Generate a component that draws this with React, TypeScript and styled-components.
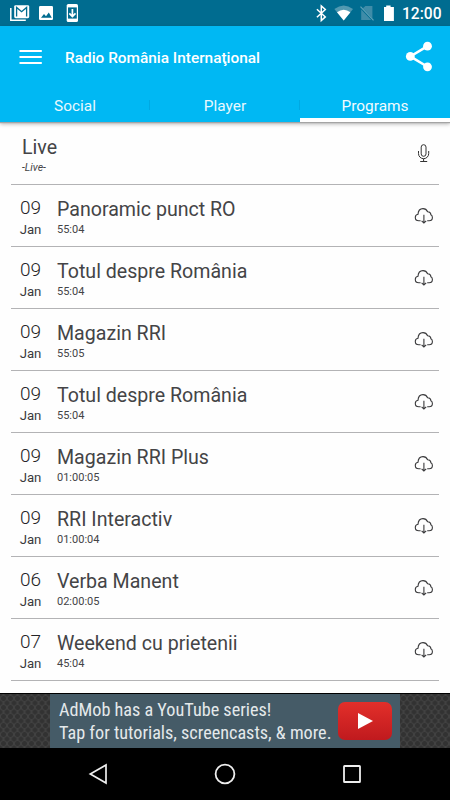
import React from "react";
import styled, { createGlobalStyle } from "styled-components";

const Global = createGlobalStyle`
  * { box-sizing: border-box; }
  html, body { margin: 0; padding: 0; background: #000; }
  body { font-family: Roboto, sans-serif; }
  svg { display: block; flex: none; }
`;

const Screen = styled.div`
  width: 450px;
  height: 800px;
  display: flex;
  flex-direction: column;
  overflow: hidden;
  background: #fefefe;
`;

const StatusBar = styled.div`
  height: 26px;
  flex: none;
  display: flex;
  align-items: center;
  justify-content: space-between;
  background: #006c90;
  color: #fff;
`;

const Clock = styled.span`
  width: 40px;
  margin-left: 8px;
  padding-top: 2px;
  font-size: 15.6px;
  font-weight: 500;
  line-height: 26px;
  white-space: nowrap;
`;

const StatusRight = styled.div`
  display: flex;
  align-items: center;
  padding-right: 8px;
  height: 26px;
`;

const Header = styled.header`
  height: 96px;
  flex: none;
  position: relative;
  background: #00b8f3;
  box-shadow: 0 1px 1px #a4a4a4, 0 2px 4px rgba(0, 0, 0, 0.3);
  color: #fff;
`;

const TitleRow = styled.div`
  height: 62px;
  display: flex;
  align-items: center;
  padding: 0 17px 0 19px;
`;

const Title = styled.h1`
  margin: 2px 0 0 23px;
  flex: 1;
  font-size: 15.4px;
  line-height: 20px;
  font-weight: 500;
`;

const Tabs = styled.nav`
  height: 34px;
  display: grid;
  grid-template-columns: repeat(3, 1fr);
`;

const Tab = styled.div<{ $active?: boolean }>`
  display: flex;
  justify-content: center;
  height: 34px;
  padding-top: 8px;
  font-size: 15.4px;
  line-height: 20px;
  color: ${(p) => (p.$active ? "#f4fbfe" : "#e8f8fe")};
  border-bottom: ${(p) => (p.$active ? "4px solid #fff" : "0")};
  background: ${(p) =>
    p.$active
      ? "none"
      : "linear-gradient(#00a9e2, #00a9e2) right 0 top 12px / 1px 10px no-repeat"};
`;

const List = styled.main`
  height: 571px;
  flex: none;
  padding: 1px 11px 0;
`;

const Row = styled.div`
  height: 62px;
  display: flex;
  border-bottom: 1px solid #b3b3b5;
  color: #444446;
`;

const DateBlock = styled.div`
  width: 39px;
  margin-right: 7px;
  padding-top: 11px;
  text-align: center;
  color: #3a3a3c;
`;

const Day = styled.div`
  font-size: 19px;
  line-height: 24px;
  font-weight: 350;
  color: #242426;
`;

const Month = styled.div`
  font-size: 13.2px;
  line-height: 19px;
`;

const Info = styled.div<{ $live?: boolean }>`
  flex: 1;
  padding-top: 13px;
  margin-left: ${(p) => (p.$live ? "11px" : "0")};
`;

const Name = styled.div`
  font-size: 19.6px;
  line-height: 24px;
  white-space: nowrap;
`;

const Detail = styled.div<{ $italic?: boolean }>`
  font-size: ${(p) => (p.$italic ? "10.5px" : "11px")};
  font-style: ${(p) => (p.$italic ? "italic" : "normal")};
  line-height: 15px;
`;

const Action = styled.div<{ $top: number }>`
  width: 20px;
  margin-right: 5px;
  padding-top: ${(p) => p.$top}px;
`;

const AdBar = styled.div`
  height: 55px;
  flex: none;
  border-top: 1px solid #000;
`;

const AdGrid = styled.div`
  height: 54px;
  display: grid;
  grid-template-columns: 50px 350px 50px;
`;

const Mesh = styled.div`
  background-color: #414141;
  background-image: radial-gradient(circle, #323232 0 2px, transparent 2.8px),
    radial-gradient(circle, #323232 0 2px, transparent 2.8px);
  background-size: 7px 9px;
  background-position: 0 0, 3.5px 4.5px;
`;

const Banner = styled.div`
  display: flex;
  align-items: center;
  justify-content: space-between;
  padding: 0 8px 0 9px;
  background: #455b67;
  color: #e4e9eb;
`;

const AdCopy = styled.div`
  width: 274px;
  font-family: "Roboto Condensed", Roboto, sans-serif;
  font-size: 18.2px;
  line-height: 23px;
  white-space: nowrap;
`;

const AdLine = styled.div`
  height: 23px;
`;

const Play = styled.div`
  width: 54px;
  height: 38px;
  border-radius: 7px;
  display: flex;
  align-items: center;
  padding-left: 20px;
  background: linear-gradient(#e32f2a, #c01a1e);
`;

const NavBar = styled.div`
  flex: 1;
  display: flex;
  align-items: center;
  justify-content: space-between;
  padding: 0 88px;
  background: #000;
`;

const NotificationIcons = () => (
  <svg width="90" height="26" viewBox="0 0 90 26" fill="none">
    <path d="M10.8 8v12.3h15" stroke="#fff" strokeWidth="1.5" />
    <rect x="14.2" y="5.2" width="15" height="13" rx="1.4" fill="#fff" />
    <path d="M16.6 16.6V7.4l5 4.3 5-4.3v9.2" stroke="#006c90" strokeWidth="1.3" />
    <rect x="39" y="6" width="14" height="14" rx="1.2" fill="#fff" />
    <path d="M41 17.8l3-3.8 2 2.2 2.8-3.6 3 5.2z" fill="#006c90" />
    <rect x="66.7" y="4" width="11.3" height="18" rx="1.6" fill="#fff" />
    <path d="M68 7.4h8.8v11.2H68z" fill="#006c90" />
    <path d="M72.4 9v7.4M69.3 13.3l3.1 3.2 3.1-3.2" stroke="#fff" strokeWidth="1.7" />
  </svg>
);

const SystemIcons = () => (
  <svg width="80" height="26" viewBox="314 0 80 26" fill="none">
    <path d="M316.9 9.2l8.4 7.7-4 3.6V6l4 3.5-8.4 7.7" stroke="#fff" strokeWidth="1.5" />
    <path d="M334.4 9q9.3-7.2 18.6 0l-9.3 11.5z" fill="#5199b1" />
    <path d="M337 12.2q6.7-5 13.4 0l-6.7 8.3z" fill="#fff" />
    <path d="M365.4 6h7v12.3l-9.5-10zM361.2 9.5V20h10z" fill="#3f8ca8" />
    <path d="M360.5 6.6L373.5 20.4" stroke="#5fa2b8" strokeWidth="1.2" />
    <path d="M384 7.1h2.2V5.4h4.4v1.7h3.3V21H384z" fill="#fff" />
  </svg>
);

const MenuIcon = () => (
  <svg width="23" height="16" viewBox="0 0 23 16">
    <path d="M.5 2h22.3M.5 8h22.3M.5 14h22.3" stroke="#fff" strokeWidth="2" />
  </svg>
);

const ShareIcon = () => (
  <svg width="28" height="32" viewBox="0 0 28 32" fill="#fff">
    <path d="M22.5 5.2L5.3 15.4l17.2 10.4" fill="none" stroke="#fff" strokeWidth="2.5" />
    <circle cx="22.5" cy="5.2" r="4.4" />
    <circle cx="5.3" cy="15.4" r="4.4" />
    <circle cx="22.5" cy="25.8" r="4.4" />
  </svg>
);

const MicIcon = () => (
  <svg width="20" height="20" viewBox="0 0 20 20" fill="none" stroke="#333" strokeWidth="1">
    <rect x="7.2" y="1.7" width="4.8" height="11.6" rx="2.4" />
    <path d="M4.5 8v2.6a5.1 5.1 0 0 0 10.2 0V8M9.6 15.7v2.5M6.2 18.5h7" />
  </svg>
);

const CloudIcon = () => (
  <svg width="20" height="20" viewBox="0 0 20 20" fill="none" stroke="#3a3a3c" strokeWidth="1.1">
    <path d="M6.6 14.7H4.8C2.7 14.7 1.3 13.2 1.3 11.4c0-1.7 1.1-2.8 2.7-3.1C4.2 4.8 6.4 2.6 9 2.6c2.3 0 3.8 1.2 4.6 3.1 2.1-.1 3.2 1.2 3.3 3.1 1 .5 1.5 1.4 1.5 2.6 0 2-1.3 3.3-3.3 3.3h-1.9" />
    <path d="M9.9 8.8v8M7.6 14.8l2.3 2.2 2.3-2.2" />
  </svg>
);

const programs = [
  ["09", "Panoramic punct RO", "55:04"],
  ["09", "Totul despre România", "55:04"],
  ["09", "Magazin RRI", "55:05"],
  ["09", "Totul despre România", "55:04"],
  ["09", "Magazin RRI Plus", "01:00:05"],
  ["09", "RRI Interactiv", "01:00:04"],
  ["06", "Verba Manent", "02:00:05"],
  ["07", "Weekend cu prietenii", "45:04"],
];

export default function App() {
  return (
    <Screen>
      <Global />
      <StatusBar>
        <NotificationIcons />
        <StatusRight>
          <SystemIcons />
          <Clock>12:00</Clock>
        </StatusRight>
      </StatusBar>
      <Header>
        <TitleRow>
          <MenuIcon />
          <Title>Radio România Internaţional</Title>
          <ShareIcon />
        </TitleRow>
        <Tabs>
          <Tab>Social</Tab>
          <Tab>Player</Tab>
          <Tab $active>Programs</Tab>
        </Tabs>
      </Header>
      <List>
        <Row>
          <Info $live>
            <Name>Live</Name>
            <Detail $italic>-Live-</Detail>
          </Info>
          <Action $top={20}>
            <MicIcon />
          </Action>
        </Row>
        {programs.map(([day, name, length], i) => (
          <Row key={i}>
            <DateBlock>
              <Day>{day}</Day>
              <Month>Jan</Month>
            </DateBlock>
            <Info>
              <Name>{name}</Name>
              <Detail>{length}</Detail>
            </Info>
            <Action $top={21}>
              <CloudIcon />
            </Action>
          </Row>
        ))}
      </List>
      <AdBar>
        <AdGrid>
          <Mesh />
          <Banner>
            <AdCopy>
              <AdLine>AdMob has a YouTube series!</AdLine>
              <AdLine>Tap for tutorials, screencasts, &amp; more.</AdLine>
            </AdCopy>
            <Play>
              <svg width="16" height="16" viewBox="0 0 16 16">
                <path d="M0 0l15 8-15 8z" fill="#fff" />
              </svg>
            </Play>
          </Banner>
          <Mesh />
        </AdGrid>
      </AdBar>
      <NavBar>
        <svg width="20" height="22" viewBox="0 0 20 22">
          <path d="M18 2v18L2.3 11z" fill="none" stroke="#eee" strokeWidth="1.7" />
        </svg>
        <svg width="22" height="22" viewBox="0 0 22 22">
          <circle cx="11" cy="11" r="9.4" fill="none" stroke="#eee" strokeWidth="1.8" />
        </svg>
        <svg width="20" height="20" viewBox="0 0 20 20">
          <rect x="2" y="2" width="16" height="16" rx=".6" fill="none" stroke="#eee" strokeWidth="1.8" />
        </svg>
      </NavBar>
    </Screen>
  );
}
